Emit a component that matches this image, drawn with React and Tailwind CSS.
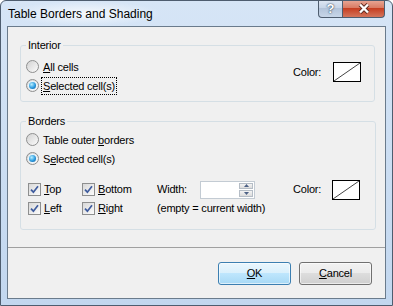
import React from 'react';

// Vista-style radio button
function Radio({ checked, focus, children }) {
    return (
        <div className="flex items-center h-[19px]">
            <span className="w-[13px] h-[13px] rounded-full border border-[#8e8f8f] bg-[linear-gradient(135deg,#d2d2d2,#fbfbfb)] flex items-center justify-center shrink-0">
                {checked && (
                    <span className="w-[7px] h-[7px] rounded-full bg-[radial-gradient(circle_at_38%_35%,#b9efff,#2a9be0_55%,#0b4f8f)] shadow-[0_0_0_1px_#eaf6fd]" />
                )}
            </span>
            <span className={focus ? 'ml-[3px] px-[1px] leading-[16px] outline-1 outline-dotted outline-black' : 'ml-[3px] px-[1px] leading-[16px]'}>
                {children}
            </span>
        </div>
    );
}

// Vista-style checkbox (always checked here)
function Check({ children }) {
    return (
        <div className="flex items-center h-[19px]">
            <span className="w-[13px] h-[13px] border border-[#8e8f8f] bg-[linear-gradient(135deg,#d8d8d8,#fcfcfc)] flex items-center justify-center shrink-0">
                <svg width="9" height="9" viewBox="0 0 9 9">
                    <path d="M1 4.6 L3.4 7.2 L8 1.2" stroke="#3f5c9e" strokeWidth="1.7" fill="none" />
                </svg>
            </span>
            <span className="ml-[3px]">{children}</span>
        </div>
    );
}

// colour swatch: white box with a diagonal line
function Swatch() {
    return (
        <span className="block w-[28px] h-[20px] border border-black bg-white">
            <svg width="26" height="18" viewBox="0 0 26 18" className="block">
                <line x1="0" y1="18" x2="26" y2="0" stroke="#444" strokeWidth="1" />
            </svg>
        </span>
    );
}

function Group({ title, className, children }) {
    return (
        <fieldset className={`border border-[#d5dfe5] rounded-[3px] ${className}`}>
            <legend className="px-[2px] leading-[13px]">{title}</legend>
            {children}
        </fieldset>
    );
}

export default function App() {
    return (
        <div className="w-[393px] h-[306px] flex flex-col rounded-t-[6px] border border-[#4e5d6f] bg-[linear-gradient(#d6e5f6,#c2d7ef)] px-[6px] pb-[6px] text-black font-['Liberation_Sans',Arial,sans-serif] overflow-hidden">
            {/* Title bar */}
            <div className="flex items-start h-[25px] shrink-0">
                <div className="h-[25px] flex items-center pl-[1px] text-[12px] bg-[radial-gradient(ellipse_at_center,rgba(255,255,255,0.75),transparent_70%)] pr-[10px]">
                    Table Borders and Shading
                </div>
                <div className="flex-1" />
                <div className="flex h-[17px] mr-[1px] -mt-[1px]">
                    <div className="w-[25px] h-[18px] border border-t-0 border-[#4e5d6f] rounded-bl-[4px] bg-[linear-gradient(#dfe8f3,#c5d3e6_50%,#b3c4da_50%,#c7d6e8)] flex items-center justify-center text-[13px] font-bold text-white [text-shadow:0_0_2px_#34495e,0_0_1px_#34495e]">
                        ?
                    </div>
                    <div className="w-[42px] h-[18px] border border-t-0 border-l-0 border-[#4e5d6f] rounded-br-[4px] bg-[linear-gradient(#e9a998,#d8775f_50%,#c63f22_50%,#d4755c)] flex items-center justify-center">
                        <svg width="14" height="11" viewBox="0 0 14 11">
                            <path d="M3 1.5 L11 9.5 M11 1.5 L3 9.5" stroke="#5b2a20" strokeWidth="4" />
                            <path d="M3 1.5 L11 9.5 M11 1.5 L3 9.5" stroke="#ffffff" strokeWidth="2.4" />
                        </svg>
                    </div>
                </div>
            </div>

            {/* Client area */}
            <div className="flex-1 flex flex-col border border-[#6a7b8c] bg-[#f0f0f0] text-[11px] tracking-[-0.2px]">
                <div className="pl-[12px] pr-[10px]">
                    <Group title="Interior" className="mt-[12px] pl-[5px] pr-[13px] pt-[5px] pb-[6px]">
                        <div className="flex items-start">
                            <div className="flex-1">
                                <Radio><u>A</u>ll cells</Radio>
                                <Radio checked focus><u>S</u>elected cell(s)</Radio>
                            </div>
                            <div className="flex items-center mt-[5px]">
                                <span className="w-[40px]">Color:</span>
                                <Swatch />
                            </div>
                        </div>
                    </Group>

                    <Group title="Borders" className="mt-[13px] pl-[5px] pr-[15px] pt-[2px] pb-[11px]">
                        <Radio>Table outer <u>b</u>orders</Radio>
                        <Radio checked>S<u>e</u>lected cell(s)</Radio>
                        <div className="flex items-start mt-[12px] pl-[2px]">
                            <div className="w-[129px] grid grid-cols-[54px_1fr]">
                                <Check><u>T</u>op</Check>
                                <Check><u>B</u>ottom</Check>
                                <Check><u>L</u>eft</Check>
                                <Check><u>R</u>ight</Check>
                            </div>
                            <div className="w-[136px]">
                                <div className="flex items-center h-[19px]">
                                    <span className="w-[43px]">Width:</span>
                                    <div className="w-[55px] h-[18px] border border-[#c3cbd3] bg-white flex justify-end p-[1px]">
                                        <div className="w-[14px] flex flex-col gap-[1px]">
                                            <div className="flex-1 border border-[#b5bdc6] bg-[linear-gradient(#f4f4f4,#dcdcdc)] flex items-center justify-center">
                                                <svg width="5" height="3" viewBox="0 0 5 3"><path d="M0 3 L2.5 0 L5 3 Z" fill="#4d6185" /></svg>
                                            </div>
                                            <div className="flex-1 border border-[#b5bdc6] bg-[linear-gradient(#f4f4f4,#dcdcdc)] flex items-center justify-center">
                                                <svg width="5" height="3" viewBox="0 0 5 3"><path d="M0 0 L2.5 3 L5 0 Z" fill="#4d6185" /></svg>
                                            </div>
                                        </div>
                                    </div>
                                </div>
                                <div className="h-[19px] flex items-center">(empty = current width)</div>
                            </div>
                            <div className="flex items-start">
                                <span className="w-[39px] h-[19px] flex items-center">Color:</span>
                                <Swatch />
                            </div>
                        </div>
                    </Group>
                </div>

                <div className="mt-[17px] h-px bg-[#a0a0a0]" />

                <div className="flex justify-end gap-[8px] pr-[13px] mt-[14px]">
                    <button className="w-[73px] h-[23px] rounded-[3px] border border-[#3c7fb1] bg-[linear-gradient(#eaf6fd,#d9f0fc_50%,#bee6fd_50%,#a7d9f5)] shadow-[inset_0_0_0_1px_rgba(255,255,255,0.6)]">
                        <u>O</u>K
                    </button>
                    <button className="w-[73px] h-[23px] rounded-[3px] border border-[#707070] bg-[linear-gradient(#f2f2f2,#ebebeb_50%,#dddddd_50%,#cfcfcf)] shadow-[inset_0_0_0_1px_rgba(255,255,255,0.6)]">
                        <u>C</u>ancel
                    </button>
                </div>
            </div>
        </div>
    );
}
